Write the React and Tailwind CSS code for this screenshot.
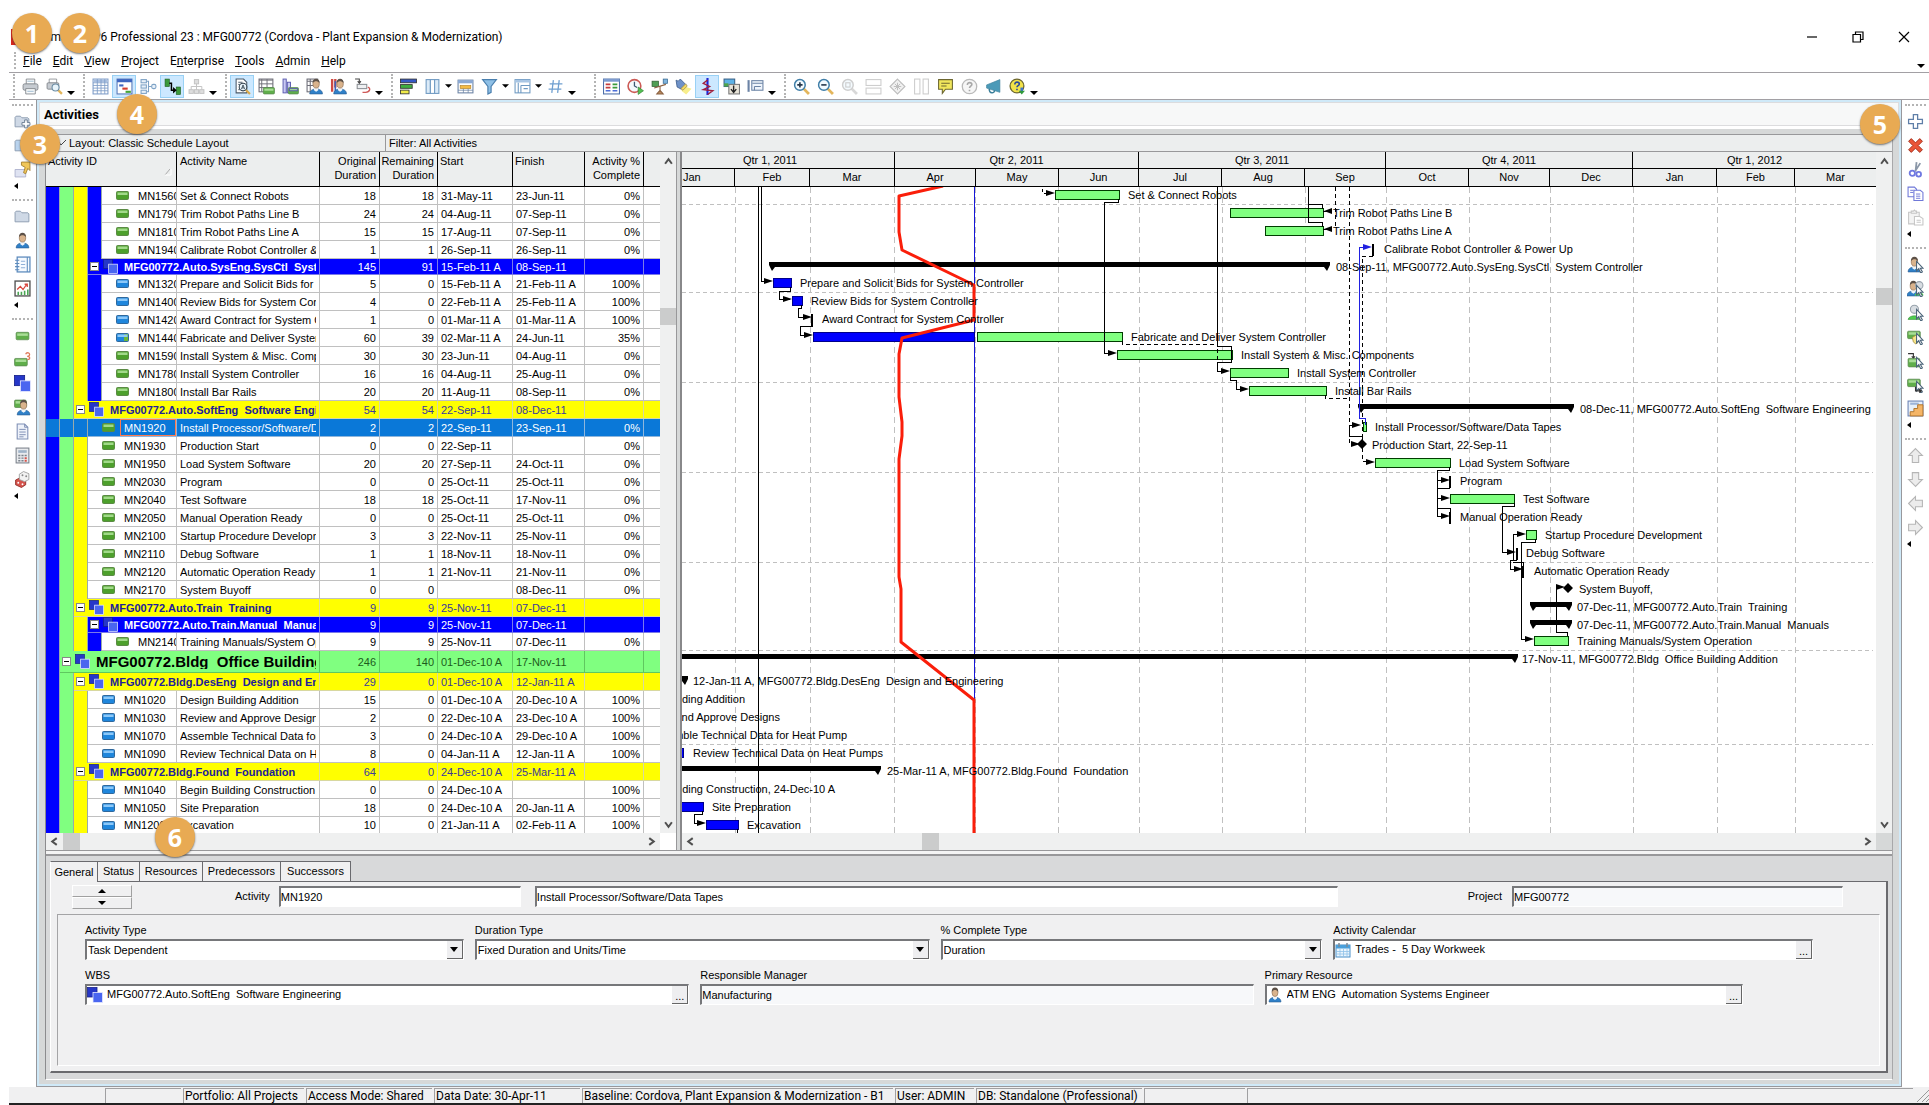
import React from "react";

/* ---------- shared shapes ---------- */
const Cursor = () => (
  <path d="M9 5v9l2-2 2 4 1.500-1-2-3.500H15z" fill="#fff" stroke="#4b6479" strokeWidth="1" />
);
const Person = ({ x = 0, hair = "#5c5148", shirt = "#2f80c8" }) => (
  <g transform={`translate(${x} 0)`}>
    <path d="M1 15c0-3 2-4 4-4.500h4c2 .5 4 1.500 4 4.500z" fill={shirt} stroke="#2a5f93" strokeWidth=".6" />
    <path d="M5 9h4v2.500L7 13l-2-1.500z" fill="#f1f4f7" />
    <ellipse cx="7" cy="5.500" rx="3" ry="4" fill="#d9b38c" stroke="#8a6a4c" strokeWidth=".6" />
    <path d="M3.800 5C3.500 2 5 .6 7 .6S10.500 2 10.200 5C9.500 3.500 8 3 7 3s-2.500.5-3.200 2z" fill={hair} />
  </g>
);
const GreenBar = ({ x = 1, y = 5, w = 12, h = 7 }) => (
  <g>
    <rect x={x} y={y} width={w} height={h} rx="1" fill="#5fae4a" stroke="#5c8a52" strokeWidth=".7" />
    <rect x={x + 1} y={y + 1} width={w - 2} height={h / 3} fill="#a9dd97" />
  </g>
);
const Squares = () => (
  <g strokeWidth=".8">
    <rect x=".5" y=".5" width="9.500" height="9.500" fill="#2637c8" stroke="#16208a" />
    <rect x="6" y="5.500" width="9.500" height="10" fill="#4a66f0" stroke="#e4e8ff" />
  </g>
);
const Folder = ({ c = "#cfd9e6" }) => (
  <path d="M1 13V4l1-1h4l1.500 1.500H13l1 1V13z" fill={c} stroke="#8d9cb0" strokeWidth=".9" />
);
const Glass = ({ children, c = "#3f7ea8", h = "#e3b65c" }) => (
  <g>
    <path d="M10 10l5 5" stroke={h} strokeWidth="2.600" />
    <circle cx="6.500" cy="6.500" r="5" fill="#f4fbff" stroke={c} strokeWidth="1.400" />
    {children}
  </g>
);
/* Each direction is a 90 degree turn of the upward block arrow. */
const Arrow = ({ r }) => (
  <path d="M8 1.500l6.500 6.500H11v6.500H5V8H1.500z" transform={`rotate(${r} 8 8)`} fill="#ececec" stroke="#b5b5b5" strokeWidth="1" />
);

const ICONS = {
  print: (
    <g stroke="#7d8288" strokeWidth=".8">
      <path d="M4 6V1h8v5z" fill="#fdfdfd" />
      <rect x="1" y="5.500" width="14" height="6" rx="1.500" fill="#c6cbd1" />
      <path d="M3.500 10h9v5h-9z" fill="#f8fafb" />
      <path d="M5 3h6M5 12.500h6" stroke="#8fb0c8" />
    </g>
  ),
  preview: (
    <g>
      <path d="M3 5V1h7v4z" fill="#fff" stroke="#8a8f94" strokeWidth=".8" />
      <rect x="1" y="4.500" width="11" height="6" rx="1" fill="#c6cbd1" stroke="#7d8288" strokeWidth=".8" />
      <path d="M11 11l4 4" stroke="#e3b65c" strokeWidth="2.200" />
      <circle cx="9" cy="9" r="3.300" fill="#e8f4fb" stroke="#6a8ba3" />
    </g>
  ),
  grid: (
    <g>
      <rect x="1" y="1" width="14" height="14" fill="#fff" stroke="#7d9cc8" />
      <rect x="1.500" y="1.500" width="13" height="2.500" fill="#a9bfe0" />
      <path d="M1 4.500h14M1 7h14M1 9.500h14M1 12h14M5 1v14M8.500 1v14M12 1v14" stroke="#7d9cc8" strokeWidth=".8" />
    </g>
  ),
  gantt: (
    <g>
      <rect x="1" y="1" width="14" height="14" fill="#fff" stroke="#5878b8" />
      <rect x="1" y="1" width="14" height="3" fill="#3f66c0" />
      <rect x="3" y="6" width="4" height="2" fill="#3f66c0" />
      <rect x="6" y="9" width="5" height="2" fill="#d33b2c" />
      <rect x="9" y="12" width="5" height="2" fill="#45a437" />
    </g>
  ),
  network: (
    <g fill="#e9f1f9" stroke="#7fa3c6">
      <path d="M6 3h2v10H6M8 8h3" fill="none" />
      <rect x="1" y="1.500" width="5" height="3" />
      <rect x="1" y="6.500" width="5" height="3" />
      <rect x="1" y="11.500" width="5" height="3" />
      <rect x="11" y="6" width="4" height="4" rx="1.500" />
    </g>
  ),
  links: (
    <g>
      <rect x="1" y="1" width="4" height="7" fill="#3b9a3b" stroke="#1f5f22" strokeWidth=".6" />
      <rect x="11.500" y="8.500" width="4" height="7" fill="#3b9a3b" stroke="#1f5f22" strokeWidth=".6" />
      <path d="M5 5h2v6.500h3" fill="none" stroke="#000" strokeWidth="1.400" />
      <path d="M8.500 8.500l3.500 3-3.500 3z" fill="#000" />
    </g>
  ),
  tree: (
    <g fill="#dedede" stroke="#c2c2c2" strokeWidth=".9">
      <path d="M8 5v3M3 11V8h10v3M8 8v3" fill="none" />
      <rect x="6" y="1.500" width="4" height="4" />
      <rect x="1" y="11" width="4" height="3.500" />
      <rect x="6" y="11" width="4" height="3.500" />
      <rect x="11" y="11" width="4" height="3.500" />
    </g>
  ),
  find: (
    <g>
      <path d="M2 1h7l3 3v10H2z" fill="#fff" stroke="#4b5a6b" />
      <path d="M4 4h4M4 6h3M4 11h2" stroke="#4b5a6b" strokeWidth=".9" />
      <path d="M11 11l4 4" stroke="#d9a84a" strokeWidth="2" />
      <circle cx="8.500" cy="8.500" r="3.600" fill="#eaf5fc" stroke="#33424f" />
      <path d="M7 10.500l1.500-4 1.500 4M7.500 9.300h2" fill="none" stroke="#33424f" strokeWidth=".8" />
    </g>
  ),
  usage1: (
    <g>
      <rect x="1" y="1" width="13" height="12" fill="#fff" stroke="#6e6e78" />
      <path d="M1 2h13M3.500 1v12M1 5.500h13M1 9h13M8.500 1v12" stroke="#6e6e78" strokeWidth=".9" />
      <GreenBar x={5} y={9} w={10.5} h={6} />
    </g>
  ),
  usage2: (
    <g fill="#c9c9f2" stroke="#5b5bb0" strokeWidth=".9">
      <rect x="1" y="1" width="3" height="13" />
      <rect x="5" y="4" width="3" height="10" />
      <GreenBar x={6} y={9} w={9.5} h={6} />
    </g>
  ),
  usage3: (
    <g>
      <rect x="1" y="1" width="10" height="12" fill="#fff" stroke="#6e6e78" />
      <path d="M1 3h10M4 1v12M1 7h10" stroke="#6e6e78" />
      <Person x={2.5} />
    </g>
  ),
  usage4: (
    <g>
      <path d="M2 1v12M5 1v8" stroke="#cf4a43" strokeWidth="2.200" />
      <path d="M5 3v10" stroke="#3f62b8" strokeWidth="1.500" />
      <Person x={2.5} />
    </g>
  ),
  trace: (
    <g fill="none" stroke="#8b8f94">
      <path d="M1 1h4v3M3.500 3L5 5l1.500-2" stroke="#444" />
      <rect x="3" y="6" width="9" height="4" fill="#eef0f2" />
      <path d="M13 8.500c3 1 2 5-2 5H8" stroke="#cf5a58" strokeWidth="1.300" />
    </g>
  ),
  bars: (
    <g stroke="#333" strokeWidth=".8">
      <rect x=".5" y="1" width="15" height="3.500" fill="#3457c4" />
      <rect x=".5" y="6.200" width="11" height="3.500" fill="#3fae3f" />
      <rect x=".5" y="11.400" width="8" height="3.500" fill="#f1ec4a" />
    </g>
  ),
  columns: (
    <g fill="#dcebf8" stroke="#6f9ac2">
      <rect x="2" y="1.500" width="4" height="13" />
      <rect x="6" y="1.500" width="4" height="13" fill="#fff" />
      <rect x="10" y="1.500" width="4" height="13" />
    </g>
  ),
  timescale: (
    <g>
      <rect x="1" y="2" width="14" height="12" fill="#fff" stroke="#6b83a5" />
      <rect x="1" y="2" width="14" height="3" fill="#8ba9d4" />
      <rect x="3" y="7" width="10" height="3" fill="#f3bb46" stroke="#b4822a" strokeWidth=".6" />
      <path d="M1 11.500h14M6 10v4M10.500 10v4" stroke="#6b83a5" strokeWidth=".7" />
    </g>
  ),
  funnel: <path d="M1.500 1.500h13L9.500 8v5.500L6.500 15V8z" fill="#8fc0e6" stroke="#4a7fae" strokeWidth="1.100" />,
  group: (
    <g fill="none" stroke="#6f9ac2">
      <rect x="1" y="1.500" width="14" height="12.500" fill="#fff" />
      <path d="M1 3h14" stroke="#a9c6e4" strokeWidth="2.500" />
      <path d="M4 4.500V14M6.500 7H15M6.500 7v7M9 10h4" />
    </g>
  ),
  hash: <path d="M6 2L4.500 14M11.500 2L10 14M2.500 5.500h12M1.500 10.500h12" stroke="#6f9fd0" strokeWidth="1.200" />,
  table: (
    <g>
      <rect x=".5" y="1" width="15" height="14" fill="#fff" stroke="#4d6fa8" />
      <rect x=".5" y="1" width="15" height="2.500" fill="#7c9bd0" />
      <path d="M2.500 6h4.500M2.500 9h4.500" stroke="#c43e3e" strokeWidth="1.600" />
      <path d="M9 6h4.500M9 9h4.500" stroke="#3b9a3b" strokeWidth="1.600" />
      <path d="M2.500 12h4.500M9 12h4.500" stroke="#4d6fd8" strokeWidth="1.400" />
    </g>
  ),
  clock: (
    <g>
      <circle cx="7" cy="7.500" r="6" fill="#f5fafd" stroke="#cc5a55" strokeWidth="1.500" />
      <path d="M7 3.500v4l2.500 1.500" stroke="#3e5872" fill="none" strokeWidth="1.200" />
      <path d="M10.500 8.500l5 3.500-5 3.500z" fill="#52c052" stroke="#2f7f2f" strokeWidth=".6" />
    </g>
  ),
  level: (
    <g>
      <rect x="1" y="3" width="6" height="5" fill="#4f9f55" stroke="#2f5f33" strokeWidth=".7" />
      <rect x="11.500" y="1" width="4" height="4" fill="#7fb4dd" stroke="#34668f" strokeWidth=".7" />
      <path d="M3 9.500L14 6M8.500 8v5M5.500 15L8.500 11.500l3 3.500z" stroke="#8a6040" fill="#b98a5c" />
    </g>
  ),
  spotlight: (
    <g>
      <path d="M9 8l6.500 2-5 5.500L6 12z" fill="#f8ee8c" />
      <path d="M1 2l2 1 2-2 5 5-4 4.500-4-2z" fill="#6f92c8" stroke="#40608f" strokeWidth=".8" />
      <path d="M10 5.500l-4.500 4.500 2 1.500 4-4z" fill="#f6d95e" stroke="#9a8a50" strokeWidth=".7" />
    </g>
  ),
  progress: (
    <g>
      <path d="M8 0v16" stroke="#1c24d8" strokeWidth="2" />
      <path d="M8 2L4 5l6 3-6 3 9 1-5 3.500" fill="none" stroke="#a01f3c" strokeWidth="1.300" />
    </g>
  ),
  image: (
    <g>
      <rect x="1" y="1" width="10" height="7" fill="#5db2e6" stroke="#3a6288" />
      <rect x="5.500" y="6" width="10" height="9" fill="#e8e4d8" stroke="#777" />
      <path d="M10 7v6M7.500 10.500l2.500 3 2.500-3" stroke="#222" fill="none" strokeWidth="1.300" />
      <rect x="1" y="5" width="4" height="3" fill="#4ea24a" />
    </g>
  ),
  layout: (
    <g fill="none" stroke="#6b83a5">
      <path d="M1.500 2v11" strokeWidth="2" />
      <rect x="4.500" y="2.500" width="10.500" height="9" fill="#eef4fb" />
      <path d="M5 5h10M7 8h6M7 8v3.500" />
    </g>
  ),
  zoomin: <Glass><path d="M4 6.500h5M6.500 4v5" stroke="#23364a" strokeWidth="1.500" /></Glass>,
  zoomout: <Glass><path d="M4 6.500h5" stroke="#23364a" strokeWidth="1.500" /></Glass>,
  zoomfit: <Glass c="#cfcfcf" h="#d8d8d8"><rect x="4.500" y="4.500" width="4" height="4" fill="none" stroke="#ccc" /></Glass>,
  splith: (
    <g fill="#fff" stroke="#cdcdcd">
      <rect x="1" y="1.500" width="14" height="5.500" />
      <rect x="1" y="9.500" width="14" height="5.500" />
    </g>
  ),
  diamond: (
    <g stroke="#bdbdbd">
      <path d="M8 1l7 7-7 7-7-7z" fill="#f1f1f1" />
      <path d="M8 4.500v7M4.500 8h7M5.500 5.500l5 5M10.500 5.500l-5 5" strokeWidth=".9" />
    </g>
  ),
  splitv: (
    <g fill="#fff" stroke="#cdcdcd">
      <rect x="1.500" y="1" width="5" height="14" />
      <rect x="9.500" y="1" width="5" height="14" />
    </g>
  ),
  comment: (
    <g>
      <path d="M1.500 1.500h13v9H8L5 14.500V10.500H1.500z" fill="#f0e65c" stroke="#6c6630" />
      <path d="M4 5h8M4 7.500h5" stroke="#6c6630" />
    </g>
  ),
  help: (
    <g>
      <circle cx="8" cy="8" r="6.800" fill="#f6f6f6" stroke="#b9b9b9" strokeWidth="1.200" />
      <path d="M6 6.500c0-3 4.200-2.600 4.200-.3 0 1.600-2.200 1.500-2.200 3.300M8 11v1.500" fill="none" stroke="#a8a8a8" strokeWidth="1.500" />
    </g>
  ),
  horn: (
    <g fill="#4b9ab8" stroke="#3b7f9a" strokeWidth=".6">
      <path d="M1.500 6.500L14 1.500v12L1.500 9.500z" />
      <path d="M4 10c0 5 5 5 5 1.500" fill="none" strokeWidth="1.400" />
    </g>
  ),
  helpnow: (
    <g>
      <circle cx="7.500" cy="7.500" r="6.500" fill="#f2e24a" stroke="#6c6630" strokeWidth="1.200" />
      <path d="M5.500 6c0-3 4.200-2.600 4.200-.3 0 1.600-2.200 1.500-2.200 3.100M7.500 10v1.500" fill="none" stroke="#2b4a9a" strokeWidth="1.500" />
      <path d="M12 9v5" stroke="#3d74d0" strokeWidth="2.500" />
      <path d="M9 12l3 3.500 3-3.500z" fill="#2f9a3a" />
    </g>
  ),
  plus: <path d="M6 1.500h4V6h4.500v4H10v4.500H6V10H1.500V6H6z" fill="#fff" stroke="#5f7fa8" strokeWidth="1.200" />,
  del: <path d="M1.500 4L4 1.500 8 5.500l4-4L14.500 4l-4 4 4 4L12 14.500l-4-4-4 4L1.500 12l4-4z" fill="#ea5538" stroke="#a32f1c" strokeWidth=".9" />,
  cut: (
    <g fill="none">
      <path d="M9 1L8 10M12.500 2L8 9" stroke="#8b97a8" strokeWidth="1.700" />
      <circle cx="5" cy="11.500" r="2.500" stroke="#6f78e0" strokeWidth="1.700" />
      <circle cx="11" cy="12.500" r="2.200" stroke="#6f78e0" strokeWidth="1.700" />
    </g>
  ),
  copy: (
    <g fill="#fff" stroke="#6f78d8">
      <path d="M1 2h6l2 2v7H1z" />
      <path d="M6.500 5h6l2.500 2v7.500H6.500z" />
      <path d="M3 5h3M3 7h3M8.500 8.500h4M8.500 10.500h4M8.500 12.500h4" strokeWidth=".9" />
    </g>
  ),
  paste: (
    <g fill="#f3f3f3" stroke="#c6c6c6">
      <path d="M1.500 3h10v11h-10z" />
      <path d="M4 4V2h2l1-1 1 1h1v2z" />
      <path d="M7 7h5l3 2v6H7z" fill="#fff" />
      <path d="M9 10.500h4M9 12.500h4" />
    </g>
  ),
  asgRes: (<g><Person x={0} /><Cursor /></g>),
  asgRole2: (
    <g>
      <Person x={-1} />
      <circle cx="11.500" cy="5" r="3.500" fill="#d8dde2" stroke="#98a2ab" />
      <path d="M7 14.500c1-4 8-4 8.500 0z" fill="#4ed04e" />
      <Cursor />
    </g>
  ),
  asgRole: (
    <g>
      <circle cx="7" cy="5" r="3.800" fill="#d8dde2" stroke="#98a2ab" />
      <path d="M1 14.500c1-4.500 11-4.500 12 0z" fill="#4ecf50" stroke="#3b8f3d" strokeWidth=".6" />
      <Cursor />
    </g>
  ),
  asgCode: (<g><GreenBar x={0.5} y={3} /><path d="M5 9l3-2 3 2-1 5-2 1-2-2z" fill="#f6e68a" stroke="#a68f3c" strokeWidth=".8" /><Cursor /></g>),
  pred: (<g><path d="M1 1.500h5v4M4.500 4L6 6l1.500-2" stroke="#333" fill="none" /><GreenBar x={1} y={6} w={11} h={8} /><Cursor /></g>),
  succ: (<g><GreenBar x={0.5} y={3} /><Cursor /><path d="M8 10v4h5M11.500 12.500L13.500 14l-2 1.500" stroke="#333" fill="none" /></g>),
  steps: (
    <g>
      <rect x="1" y="1" width="14" height="14" fill="#e6effa" stroke="#6b83b5" />
      <path d="M3 3.500h8" stroke="#9db4d8" strokeWidth="2" />
      <path d="M3 15v-4h3.500V8H10V4.500h5V15z" fill="#f5b566" stroke="#b0742a" strokeWidth=".9" />
    </g>
  ),
  up: <Arrow r={0} />,
  down: <Arrow r={180} />,
  left: <Arrow r={270} />,
  right: <Arrow r={90} />,
  folderAdd: (<g><Folder /><path d="M10 6.500h2.500V9H15v2.500h-2.500V14H10v-2.500H7.500V9H10z" fill="#fff" stroke="#6a7d92" strokeWidth=".9" /></g>),
  folderOpen: <Folder c="#b9d3ee" />,
  folderUp: (<g><path d="M1 15V8h10v7z" fill="#dfe3f2" stroke="#a9aecb" strokeWidth=".8" /><path d="M7 1h8v8l-2-2-2 5-2-1 1.500-5L7 4z" fill="#f0c659" stroke="#a07c2a" strokeWidth=".8" /></g>),
  folder: <Folder />,
  person: <Person x={1} />,
  notebook: (
    <g>
      <rect x="3" y="1" width="12" height="14" fill="#f6faff" stroke="#5d8bbd" strokeWidth="1.200" />
      <path d="M1 4h4M1 7h4M1 10h4M1 13h4M12.500 1v14" stroke="#5d8bbd" />
      <path d="M6.500 5h4M6.500 8h4M6.500 11h4" stroke="#8fb0d8" />
    </g>
  ),
  chart: (
    <g>
      <rect x="1" y="1" width="14" height="14" fill="#fff" stroke="#555" strokeWidth="1.300" />
      <path d="M3 9l3-3 2.500 3L12 4M10 4h2.500v2.500" fill="none" stroke="#d8453c" strokeWidth="1.200" />
      <path d="M4 14v-3M7 14v-3M10 14v-4M13 14V9" stroke="#49a552" strokeWidth="1.500" />
    </g>
  ),
  act: <GreenBar x={2} y={5} w={12} h={7} />,
  act2: (<g><GreenBar x={0.5} y={7} w={12} h={7} /><path d="M11 3c1-2.500 4.500-1 3.500 1-.5 1.500-2 1-2 1 3 0 3 3 0 3" fill="none" stroke="#e07a5a" strokeWidth="1.200" /></g>),
  wbs: <Squares />,
  actPerson: (<g><GreenBar x={0.5} y={1} w={11} h={7} /><Person x={2} /></g>),
  doc: (
    <g fill="#eef2fa" stroke="#7f8fb5">
      <path d="M3 1h7l3 3v11H3z" />
      <path d="M5 6h6M5 8.500h6M5 11h6M5 13h4M10 1v3h3" strokeWidth=".9" fill="none" />
    </g>
  ),
  calc: (
    <g>
      <rect x="2" y="1" width="12" height="14" fill="#e9ebee" stroke="#7b828b" />
      <rect x="4" y="3" width="8" height="2.500" fill="#9fb3c8" />
      <path d="M4 8h2M7 8h2M4 10.500h2M7 10.500h2M4 13h2M7 13h2M10 8h2" stroke="#7b828b" strokeWidth="1.300" />
      <path d="M10 10.500h2M10 13h2" stroke="#d8534a" strokeWidth="1.800" />
    </g>
  ),
  dice: (
    <g>
      <path d="M1.500 8.500l4-2 5.500 2v4.500l-4 2.500-5.500-2.500z" fill="#d6534c" stroke="#8e2822" strokeWidth=".8" />
      <path d="M5 3l4-2.500 5 2V8l-4 2-5-2z" fill="#f2f2f2" stroke="#9a9a9a" strokeWidth=".8" />
      <circle cx="8" cy="4" r=".9" fill="#888" /><circle cx="11.500" cy="5" r=".9" fill="#888" />
      <circle cx="4" cy="11" r=".9" fill="#fff" /><circle cx="8" cy="12.500" r=".9" fill="#fff" />
    </g>
  ),
  calendar: (
    <g>
      <rect x="1" y="3" width="14" height="12" fill="#eaf5fd" stroke="#4a8fc8" />
      <rect x="1" y="3" width="14" height="3.500" fill="#4aa0dc" />
      <path d="M1 9.500h14M1 12h14M5 7v8M8.500 7v8M12 7v8" stroke="#8fc2e8" strokeWidth=".8" />
      <path d="M4 1v4M12 1v4" stroke="#7b8a98" strokeWidth="1.500" />
    </g>
  ),
};

const Icon = ({ name, className = "size-4" }) => (
  <svg viewBox="0 0 16 16" className={className} aria-hidden="true">{ICONS[name]}</svg>
);

/* ---------- tool bars ---------- */
const Dots = () => <span className="h-6 w-0 border-l-2 border-dotted border-[#b4b4b4]" />;
const Caret = () => (
  <svg viewBox="0 0 8 4" className="h-1 w-2" aria-hidden="true"><path d="M0 0h8L4 4z" /></svg>
);

function Tool({ name, on, drop }) {
  return (
    <button
      type="button"
      aria-label={name}
      className={`flex h-[23px] shrink-0 items-center border ${drop ? "w-[33px] gap-1 pl-[3px]" : "w-6 justify-center"} ${
        on ? "border-[#99d1f5] bg-[#cce8ff]" : "border-transparent"
      }`}
    >
      <Icon name={name} className="size-[17px] shrink-0" />
      {drop && <svg viewBox="0 0 8 4" className="h-1 w-[7px] shrink-0" aria-hidden="true"><path d="M0 0h8L4 4z" /></svg>}
    </button>
  );
}

const TOOLS = [
  ["print", "preview"],
  ["grid", "gantt*", "network", "links*", "tree"],
  ["find*", "usage1", "usage2", "usage3", "usage4", "trace"],
  ["bars", "columns+", "timescale", "funnel+", "group+", "hash"],
  ["table", "clock", "level", "spotlight", "progress*", "image", "layout"],
  ["zoomin", "zoomout", "zoomfit", "splith", "diamond", "splitv", "comment", "help", "horn", "helpnow"],
];

function TopTools() {
  return (
    <div className="flex h-[26px] items-center pl-1">
      {TOOLS.map((g, i) => (
        <div key={i} className={`flex items-center ${i === 3 ? "mr-[17px]" : "mr-[7px]"}`}>
          <Dots />
          <div className="ml-[3px] flex">
            {g.map((n) => (
              <Tool key={n} name={n.replace(/[*+]/, "")} on={n.endsWith("*")} drop={n.endsWith("+")} />
            ))}
          </div>
          <button type="button" aria-label="More" className="flex h-[18px] w-[10px] items-end justify-center"><Caret /></button>
        </div>
      ))}
    </div>
  );
}

function SideTools({ groups, label }) {
  return (
    <nav aria-label={label} className="flex w-[27px] shrink-0 flex-col pt-px">
      {groups.map((g, i) => (
        <div key={i} className="mb-[5px] flex flex-col items-center">
          <span className="flex h-2 w-full items-center px-[3px]"><span className="w-full border-t-2 border-dotted border-[#b4b4b4]" /></span>
          {g.map((n) => (
            <button key={n} type="button" aria-label={n} className="flex h-6 w-6 items-center justify-center">
              <Icon name={n} className="size-[17px]" />
            </button>
          ))}
          <button type="button" aria-label="More" className="flex h-[10px] w-full items-center pl-[5px]">
            <svg viewBox="0 0 4 6" className="h-[6px] w-1" aria-hidden="true"><path d="M4 0v6L0 3z" /></svg>
          </button>
        </div>
      ))}
    </nav>
  );
}

/* ---------- activity table ---------- */
const BAND = ["bg-[#0000ff]", "bg-[#80ff80]", "bg-[#ffff00]", "bg-[#0000ff]"];
const GROUP = [
  null,
  { bg: "bg-[#80ff80]", text: "text-black text-[15px]", num: "text-[#1d5c1d]", h: "h-[22px]", line: "border-[#5fc85f]" },
  { bg: "bg-[#ffff00]", text: "text-[#20209a]", num: "text-[#3a3a9c]", h: "h-[18px]", line: "border-[#d8d8a0]" },
  { bg: "bg-[#0000ff]", text: "text-white", num: "text-white", h: "h-[16px]", line: "border-[#7a7ae8]" },
];

const ROWS = [
  [4, "g", "MN1560", "Set & Connect Robots", 18, 18, "31-May-11", "23-Jun-11", "0%"],
  [4, "g", "MN1790", "Trim Robot Paths Line B", 24, 24, "04-Aug-11", "07-Sep-11", "0%"],
  [4, "g", "MN1810", "Trim Robot Paths Line A", 15, 15, "17-Aug-11", "07-Sep-11", "0%"],
  [4, "g", "MN1940", "Calibrate Robot Controller & Power Up", 1, 1, "26-Sep-11", "26-Sep-11", "0%"],
  [3, "G", "MFG00772.Auto.SysEng.SysCtl  System Controller", "", 145, 91, "15-Feb-11 A", "08-Sep-11", ""],
  [4, "b", "MN1320", "Prepare and Solicit Bids for System Controller", 5, 0, "15-Feb-11 A", "21-Feb-11 A", "100%"],
  [4, "b", "MN1400", "Review Bids for System Controller", 4, 0, "22-Feb-11 A", "25-Feb-11 A", "100%"],
  [4, "b", "MN1420", "Award Contract for System Controller", 1, 0, "01-Mar-11 A", "01-Mar-11 A", "100%"],
  [4, "m", "MN1440", "Fabricate and Deliver System Controller", 60, 39, "02-Mar-11 A", "24-Jun-11", "35%"],
  [4, "g", "MN1590", "Install System & Misc. Components", 30, 30, "23-Jun-11", "04-Aug-11", "0%"],
  [4, "g", "MN1780", "Install System Controller", 16, 16, "04-Aug-11", "25-Aug-11", "0%"],
  [4, "g", "MN1800", "Install Bar Rails", 20, 20, "11-Aug-11", "08-Sep-11", "0%"],
  [2, "G", "MFG00772.Auto.SoftEng  Software Engineering", "", 54, 54, "22-Sep-11", "08-Dec-11", ""],
  [3, "g", "MN1920", "Install Processor/Software/Data Tapes", 2, 2, "22-Sep-11", "23-Sep-11", "0%"],
  [3, "g", "MN1930", "Production Start", 0, 0, "22-Sep-11", "", "0%"],
  [3, "g", "MN1950", "Load System Software", 20, 20, "27-Sep-11", "24-Oct-11", "0%"],
  [3, "g", "MN2030", "Program", 0, 0, "25-Oct-11", "25-Oct-11", "0%"],
  [3, "g", "MN2040", "Test Software", 18, 18, "25-Oct-11", "17-Nov-11", "0%"],
  [3, "g", "MN2050", "Manual Operation Ready", 0, 0, "25-Oct-11", "25-Oct-11", "0%"],
  [3, "g", "MN2100", "Startup Procedure Development", 3, 3, "22-Nov-11", "25-Nov-11", "0%"],
  [3, "g", "MN2110", "Debug Software", 1, 1, "18-Nov-11", "18-Nov-11", "0%"],
  [3, "g", "MN2120", "Automatic Operation Ready", 1, 1, "21-Nov-11", "21-Nov-11", "0%"],
  [3, "g", "MN2170", "System Buyoff", 0, 0, "", "08-Dec-11", "0%"],
  [2, "G", "MFG00772.Auto.Train  Training", "", 9, 9, "25-Nov-11", "07-Dec-11", ""],
  [3, "G", "MFG00772.Auto.Train.Manual  Manuals", "", 9, 9, "25-Nov-11", "07-Dec-11", ""],
  [4, "g", "MN2140", "Training Manuals/System Operation", 9, 9, "25-Nov-11", "07-Dec-11", "0%"],
  [1, "G", "MFG00772.Bldg  Office Building Addition", "", 246, 140, "01-Dec-10 A", "17-Nov-11", ""],
  [2, "G", "MFG00772.Bldg.DesEng  Design and Engineering", "", 29, 0, "01-Dec-10 A", "12-Jan-11 A", ""],
  [3, "b", "MN1020", "Design Building Addition", 15, 0, "01-Dec-10 A", "20-Dec-10 A", "100%"],
  [3, "b", "MN1030", "Review and Approve Designs", 2, 0, "22-Dec-10 A", "23-Dec-10 A", "100%"],
  [3, "b", "MN1070", "Assemble Technical Data for Heat Pump", 3, 0, "24-Dec-10 A", "29-Dec-10 A", "100%"],
  [3, "b", "MN1090", "Review Technical Data on Heat Pumps", 8, 0, "04-Jan-11 A", "12-Jan-11 A", "100%"],
  [2, "G", "MFG00772.Bldg.Found  Foundation", "", 64, 0, "24-Dec-10 A", "25-Mar-11 A", ""],
  [3, "b", "MN1040", "Begin Building Construction", 0, 0, "24-Dec-10 A", "", "100%"],
  [3, "b", "MN1050", "Site Preparation", 18, 0, "24-Dec-10 A", "20-Jan-11 A", "100%"],
  [3, "b", "MN1200", "Excavation", 10, 0, "21-Jan-11 A", "02-Feb-11 A", "100%"],
];

const Pill = ({ kind }) => (
  <svg viewBox="0 0 13 9" className="mr-[9px] ml-[14px] h-[9px] w-[13px] shrink-0" aria-hidden="true">
    <rect x=".5" y=".5" width="12" height="8" rx="1" fill={kind === "g" ? "#4da02c" : "#1f86dc"} stroke={kind === "g" ? "#5b8a44" : "#2f689c"} />
    {kind === "m" && <path d="M8 1h4v7H8z" fill="#6cb83a" />}
    <rect x="1.500" y="1.500" width="10" height="2.500" fill={kind === "g" ? "#a2d98a" : "#8cc8f8"} />
  </svg>
);

const Bands = ({ n, selected }) =>
  BAND.slice(0, n).map((c, i) => (
    <span key={i} className={`w-[14px] shrink-0 border-r border-[#9aa] ${selected ? "bg-[#0a78d8]" : c}`} />
  ));

function Row({ row, last }) {
  const [depth, kind, id, name, od, rd, start, finish, pct] = row;
  const isGroup = kind === "G";
  const sel = id === "MN1920";
  const g = isGroup ? GROUP[depth] : null;
  const h = last ? "h-[16px]" : isGroup ? g.h : "h-[18px]";
  const line = isGroup ? g.line : sel ? "border-[#8fb6dc]" : "border-[#c0c0c0]";
  const tone = isGroup ? `${g.bg} ${g.num}` : sel ? "bg-[#0a78d8] text-white" : "bg-white";
  const cell = `overflow-hidden border-r p-0 whitespace-pre ${last ? "" : "border-b"} ${line} ${tone}`;
  const tail = (
    <>
      <td className={`${cell} pr-[3px] text-right`}>{od}</td>
      <td className={`${cell} pr-[3px] text-right`}>{rd}</td>
      <td className={`${cell} pl-[3px]`}>{start}</td>
      <td className={`${cell} pl-[3px]`}>{finish}</td>
      <td className={`${cell} pr-[3px] text-right`}>{pct}</td>
      <td className={`${cell} border-r-0`} />
    </>
  );
  if (isGroup) {
    return (
      <tr className={h}>
        <td colSpan={2} className="p-0">
          <div className={`flex overflow-hidden ${h}`}>
            <Bands n={depth} />
            <div className={`flex min-w-0 flex-1 items-center overflow-hidden border-r border-b pr-[3px] font-bold whitespace-pre ${line} ${g.bg} ${g.text}`}>
              <button type="button" aria-label="Collapse" className="mr-1 ml-[2px] flex size-[9px] shrink-0 items-center justify-center border border-[#888] bg-white">
                <span className="h-px w-[5px] bg-black" />
              </button>
              <Icon name="wbs" className="mr-[6px] size-[15px] shrink-0" />
              <span className="min-w-0 flex-1 overflow-hidden">{id}</span>
            </div>
          </div>
        </td>
        {tail}
      </tr>
    );
  }
  return (
    <tr className={h}>
      <td className="p-0">
        <div className={`flex overflow-hidden ${h}`}>
          <Bands n={depth} selected={sel} />
          <div className={`flex min-w-0 flex-1 items-center overflow-hidden border-r ${last ? "" : "border-b"} ${line} ${tone}`}>
            <Pill kind={kind} />
            <span className={sel ? "-ml-[4px] flex h-full flex-1 items-center border border-[#ff7a50] pl-[3px]" : ""}>{id}</span>
          </div>
        </div>
      </td>
      <td className={`${cell} px-[3px]`}><div className="overflow-hidden">{name}</div></td>
      {tail}
    </tr>
  );
}

const TH = "h-[35px] overflow-hidden border-r border-b border-black bg-[#eceeee] p-0 align-top font-normal leading-[14px] pt-[2px] whitespace-pre";

function ActivityTable() {
  return (
    <table className="w-full table-fixed border-separate border-spacing-0 text-[11px] leading-[14px]">
      <colgroup>
        <col className="w-[131px]" /><col className="w-[143px]" /><col className="w-[60px]" /><col className="w-[58px]" />
        <col className="w-[75px]" /><col className="w-[72px]" /><col className="w-[59px]" /><col />
      </colgroup>
      <thead>
        <tr>
          <th className={`${TH} pl-[2px] text-left`}>
            Activity ID
            <svg viewBox="0 0 8 8" className="mr-1 ml-auto size-2" aria-hidden="true"><path d="M1 7L6 1" stroke="#aaa" /><path d="M1 7h6V1" fill="none" stroke="#fff" /></svg>
          </th>
          <th className={`${TH} pl-[3px] text-left`}>Activity Name</th>
          <th className={`${TH} pr-[3px] text-right`}>{"Original\nDuration"}</th>
          <th className={`${TH} pr-[3px] text-right`}>{"Remaining\nDuration"}</th>
          <th className={`${TH} pl-[2px] text-left`}>Start</th>
          <th className={`${TH} pl-[2px] text-left`}>Finish</th>
          <th className={`${TH} pr-[3px] text-right`}>{"Activity %\nComplete"}</th>
          <th className={`${TH} border-r-0`} />
        </tr>
      </thead>
      <tbody>
        {ROWS.map((r, i) => <Row key={r[2]} row={r} last={i === ROWS.length - 1} />)}
      </tbody>
    </table>
  );
}

/* ---------- scroll bars ---------- */
const Chevron = ({ d }) => (
  <svg viewBox="0 0 8 8" className="size-[9px]" fill="none" stroke="#505050" strokeWidth="1.800" aria-hidden="true"><path d={d} /></svg>
);
const VScroll = ({ thumb }) => (
  <div className="flex w-4 shrink-0 flex-col items-center bg-[#eff0f0]">
    <button type="button" aria-label="Scroll up" className="flex h-[18px] items-center"><Chevron d="M1 6l3-4 3 4" /></button>
    <div className="flex w-full flex-1 flex-col">
      <span className={`${thumb} h-[17px] w-full bg-[#cbcccc]`} />
    </div>
    <button type="button" aria-label="Scroll down" className="flex h-[18px] items-center"><Chevron d="M1 2l3 4 3-4" /></button>
  </div>
);
const HScroll = ({ thumb, end }) => (
  <div className={`flex h-[17px] items-center bg-[#eff0f0] ${end}`}>
    <button type="button" aria-label="Scroll left" className="flex w-[17px] justify-center"><Chevron d="M6 1L2 4l4 3" /></button>
    <div className="flex h-full flex-1"><span className={`${thumb} h-full w-[17px] bg-[#cbcccc]`} /></div>
    <button type="button" aria-label="Scroll right" className="flex w-[17px] justify-center"><Chevron d="M2 1l4 3-4 3" /></button>
  </div>
);

/* ---------- Gantt chart ---------- */
const MONTH_X = [735, 810, 894, 975, 1058, 1139, 1222, 1305, 1386, 1469, 1550, 1633, 1717, 1795];
const QUARTERS = [
  ["Qtr 1, 2011", "w-[213px]", [["Jan", "w-[53px]"], ["Feb", "w-[75px]"], ["Mar", "flex-1"]]],
  ["Qtr 2, 2011", "w-[244px]", [["Apr", "w-[81px]"], ["May", "w-[83px]"], ["Jun", "flex-1"]]],
  ["Qtr 3, 2011", "w-[247px]", [["Jul", "w-[83px]"], ["Aug", "w-[83px]"], ["Sep", "flex-1"]]],
  ["Qtr 4, 2011", "w-[247px]", [["Oct", "w-[83px]"], ["Nov", "w-[81px]"], ["Dec", "flex-1"]]],
  ["Qtr 1, 2012", "flex-1", [["Jan", "w-[84px]"], ["Feb", "w-[78px]"], ["Mar", "flex-1"]]],
];

/* [rowTop, x1, x2, colour] */
const G = "#80ff80";
const B = "#0000ff";
const BARS = [
  [188, 1055, 1119, G], [206, 1230, 1323, G], [224, 1265, 1323, G],
  [276, 773, 791, B], [294, 792, 802, B], [330, 813, 974, B], [330, 977, 1122, G],
  [348, 1117, 1232, G], [366, 1230, 1288, G], [384, 1249, 1326, G],
  [420, 1363, 1366, G], [456, 1375, 1450, G], [492, 1450, 1514, G], [528, 1526, 1536, G],
  [634, 1534, 1568, G], [746, 676, 683, B], [800, 670, 703, B], [818, 706, 738, B],
];
const SUMS = [
  [260, 769, 1330], [402, 1358, 1574], [600, 1530, 1572], [618, 1530, 1572],
  [652, 660, 1518], [674, 660, 688], [764, 660, 881],
];
const TICKS = [[1373, 245], [812, 315], [1450, 477], [1450, 513], [1517, 549], [1523, 567]];
const LABELS = [
  [188, 1128, "Set & Connect Robots"],
  [206, 1333, "Trim Robot Paths Line B"],
  [224, 1333, "Trim Robot Paths Line A"],
  [242, 1384, "Calibrate Robot Controller & Power Up"],
  [260, 1336, "08-Sep-11, MFG00772.Auto.SysEng.SysCtl  System Controller"],
  [276, 800, "Prepare and Solicit Bids for System Controller"],
  [294, 811, "Review Bids for System Controller"],
  [312, 822, "Award Contract for System Controller"],
  [330, 1131, "Fabricate and Deliver System Controller"],
  [348, 1241, "Install System & Misc. Components"],
  [366, 1297, "Install System Controller"],
  [384, 1335, "Install Bar Rails"],
  [402, 1580, "08-Dec-11, MFG00772.Auto.SoftEng  Software Engineering"],
  [420, 1375, "Install Processor/Software/Data Tapes"],
  [438, 1372, "Production Start, 22-Sep-11"],
  [456, 1459, "Load System Software"],
  [474, 1460, "Program"],
  [492, 1523, "Test Software"],
  [510, 1460, "Manual Operation Ready"],
  [528, 1545, "Startup Procedure Development"],
  [546, 1526, "Debug Software"],
  [564, 1534, "Automatic Operation Ready"],
  [582, 1579, "System Buyoff,"],
  [600, 1577, "07-Dec-11, MFG00772.Auto.Train  Training"],
  [618, 1577, "07-Dec-11, MFG00772.Auto.Train.Manual  Manuals"],
  [634, 1577, "Training Manuals/System Operation"],
  [652, 1522, "17-Nov-11, MFG00772.Bldg  Office Building Addition"],
  [674, 693, "12-Jan-11 A, MFG00772.Bldg.DesEng  Design and Engineering"],
  [692, 745, "Design Building Addition", "end"],
  [710, 780, "Review and Approve Designs", "end"],
  [728, 847, "Assemble Technical Data for Heat Pump", "end"],
  [746, 693, "Review Technical Data on Heat Pumps"],
  [764, 887, "25-Mar-11 A, MFG00772.Bldg.Found  Foundation"],
  [782, 835, "Begin Building Construction, 24-Dec-10 A", "end"],
  [800, 712, "Site Preparation"],
  [818, 747, "Excavation"],
];
const LINKS = [
  "M758 188V834", "M761 188V282H770", "M790 288V292H779V300H790", "M801 306V309H798V318H808",
  "M812 320V327H800V336H810", "M1042 190V193M1044 194H1050", "M1118 200V203H1104V354H1112",
  "M1217 188V347H1231V363H1217V372H1226", "M1230 378V381H1236V390H1246",
  "M1308 188V223H1322V228M1308 205H1322V210M1323 212H1330M1323 230H1330",
  "M1349 426H1358M1349 426V437H1362V442", "M1449 468V471H1437V517H1446M1437 481H1446M1450 489H1437M1437 499H1446M1450 509H1437M1450 509V516",
  "M1514 504V507H1502V553H1512", "M1513 561V535H1522M1535 540V543H1521V640H1530M1516 556V561H1510V570H1518M1513 563H1523V567",
  "M1556 633V588H1562M1556 633H1567V637", "M702 812V815H694V824H702", "M737 830V834H742",
];
const DASHES = [
  "M1122 342V345H1217", "M1325 396V399H1349", "M1335 188V230", "M1349 188V444H1356", "M1373 257H1362V462H1370", "M1217 350V362",
];
const HEADS = [
  [773, 282], [792, 300], [812, 318], [813, 336], [1055, 194], [1117, 354], [1230, 372], [1249, 390],
  [1361, 426], [1360, 445], [1375, 463], [1450, 481], [1450, 499], [1450, 517], [1526, 535],
  [1516, 553], [1523, 570], [1565, 588], [1534, 640], [706, 824],
];

function Gantt() {
  return (
    <div className="flex min-w-0 flex-1 flex-col overflow-hidden bg-white">
      <div className="flex h-[35px] shrink-0 bg-[#eceeee] text-center text-[11px]">
        {QUARTERS.map(([q, w, months], i) => (
          <div key={q} className={`flex flex-col ${w} ${i === 4 ? "" : "shrink-0 border-r border-black"}`}>
            <div className={`h-[17px] border-b border-black leading-[16px] ${i === 0 ? "pr-9" : ""}`}>{q}</div>
            <div className="flex h-[18px] border-b border-black leading-[17px]">
              {months.map(([m, mw], j) => (
                <div key={m} className={`${mw} ${j < 2 ? "shrink-0 border-r border-black" : ""} ${i === 0 && j === 0 ? "pl-px text-left" : ""}`}>{m}</div>
              ))}
            </div>
          </div>
        ))}
      </div>
      <svg width="1194" height="646" viewBox="682 188 1194 646" className="block max-w-none shrink-0 overflow-hidden text-[11px]" role="img" aria-label="Gantt chart">
        <g stroke="#c0c0c0" strokeDasharray="6 4" shapeRendering="crispEdges">
          {MONTH_X.map((x) => <path key={x} d={`M${x} 188V834`} />)}
          {[205, 293, 383, 473, 563, 651, 745].map((y) => <path key={y} d={`M682 ${y}H1873`} strokeDasharray="4 3" />)}
        </g>
        <path d="M974 188V702" stroke="#1616d8" shapeRendering="crispEdges" />
        {BARS.map(([y, a, b, c]) => (
          <rect key={`${y}-${a}`} x={a} y={y + 3} width={b - a} height="9" fill={c} stroke={c === B ? "#00008a" : "#003c00"} shapeRendering="crispEdges" />
        ))}
        {SUMS.map(([y, a, b]) => (
          <path key={y} d={`M${a} ${y + 3}H${b}v3l-3 6-3-4H${a + 6}l-3 4-3-6z`} />
        ))}
        <g fill="none" stroke="#000" shapeRendering="crispEdges">
          {LINKS.map((d) => <path key={d} d={d} />)}
          {DASHES.map((d) => <path key={d} d={d} strokeDasharray="4 3" />)}
          {TICKS.map(([x, y]) => <path key={`${x}-${y}`} d={`M${x} ${y}v12`} strokeWidth="2" />)}
        </g>
        {HEADS.map(([x, y]) => <path key={`${x}-${y}`} d={`M${x} ${y}l-9-3v6z`} />)}
        <path d="M1324 212l8-3v6zM1324 230l8-3v6z" />
        <path d="M1362 440l5 5-5 5-5-5zM1568 584l5 5-5 5-5-5z" />
        <path d="M1368 248H1359V419H1365V426" fill="none" stroke="#2020e0" shapeRendering="crispEdges" />
        <path d="M1372 248l-9-3v6z" fill="#2020e0" />
        <path
          d="M943 187L899 197V233L902 251 974 286V321L902 339 899 355V398L902 423V437L899 460V578L901 590V643L974 701V834"
          fill="none" stroke="#fa1e0a" strokeWidth="3" strokeLinejoin="round"
        />
        <g>
          {LABELS.map(([y, x, t, anchor]) => (
            <text key={y} x={x} y={y + 12} textAnchor={anchor || "start"} className="whitespace-pre">{t}</text>
          ))}
        </g>
      </svg>
    </div>
  );
}

/* ---------- details form ---------- */
const SUNK = "h-[21px] border-t-2 border-l-2 border-r border-b border-t-[#76777a] border-l-[#76777a] border-r-white border-b-white";

function Select({ id, label, value }) {
  return (
    <div className="flex min-w-0 flex-col gap-px">
      <label htmlFor={id}>{label}</label>
      <div className={`relative flex bg-white ${SUNK}`}>
        <select id={id} defaultValue={value} className="w-full appearance-none bg-white pl-px outline-none"><option>{value}</option></select>
        <span className="pointer-events-none absolute inset-y-0 right-0 flex w-4 items-center justify-center border-r border-b border-[#666] bg-[#eeeef0]">
          <svg viewBox="0 0 8 5" className="h-[5px] w-2" aria-hidden="true"><path d="M0 0h8L4 5z" /></svg>
        </span>
      </div>
    </div>
  );
}
function Lookup({ id, label, value, icon }) {
  return (
    <div className="flex min-w-0 flex-col gap-px">
      <label htmlFor={id}>{label}</label>
      <div className={`flex items-stretch bg-white ${SUNK}`}>
        <Icon name={icon} className="mr-1 size-4 shrink-0 self-center" />
        <input id={id} defaultValue={value} className="min-w-0 flex-1 pb-[2px] outline-none" />
        <button type="button" aria-label={`Choose ${label}`} className="flex w-4 items-end justify-center border-r border-b border-[#666] bg-[#eeeef0] leading-[14px]">...</button>
      </div>
    </div>
  );
}

function Details() {
  return (
    <section className="flex flex-1 flex-col bg-[#d8d9da] px-1 pt-[5px] pb-[6px] text-[11px] leading-[15px]">
      <div role="tablist" className="flex h-5">
        {["General", "Status", "Resources", "Predecessors", "Successors"].map((t, i) => (
          <button
            key={t} type="button" role="tab" aria-selected={i === 0}
            className={`border-t border-r border-[#6a6a6e] bg-[#f0f0f1] ${
              i === 0 ? "relative -mb-px h-[21px] w-12 border-l border-l-white" : ["", "w-[42px]", "w-[63px]", "w-[78px]", "w-[70px]"][i]
            }`}
          >
            {t}
          </button>
        ))}
      </div>
      <div className="flex flex-1 flex-col border-t border-r-2 border-b-2 border-l border-[#6a6a6e] border-l-white bg-[#f0f0f1] px-[6px] pb-[5px]">
        <div className="flex h-[32px] items-center pb-[3px]">
          <div className="ml-[15px] flex w-[60px] flex-col">
            {["M0 4h8L4 0z", "M0 0h8L4 4z"].map((d, i) => (
              <button key={d} type="button" aria-label={i ? "Next" : "Previous"} className="flex h-3 items-center justify-center border border-[#a0a0a0] border-t-white border-l-white">
                <svg viewBox="0 0 8 4" className="h-1 w-2" aria-hidden="true"><path d={d} /></svg>
              </button>
            ))}
          </div>
          <label htmlFor="act" className="mr-[9px] ml-[103px]">Activity</label>
          <input id="act" defaultValue="MN1920" className={`w-[242px] bg-white ${SUNK}`} />
          <input aria-label="Activity name" defaultValue="Install Processor/Software/Data Tapes" className={`ml-[14px] min-w-0 flex-1 bg-white ${SUNK}`} />
          <label htmlFor="proj" className="mr-[10px] ml-[130px]">Project</label>
          <input id="proj" defaultValue="MFG00772" className={`mr-[37px] w-[331px] bg-[#f7f8fa] ${SUNK}`} />
        </div>
        <div className="flex flex-1 flex-col gap-2 border border-[#a4a4a6] border-r-white border-b-white pt-2 pl-[27px]">
          <div className="grid grid-cols-[379fr_455fr_382fr_480fr] gap-x-[11px] pr-[66px]">
            <Select id="atype" label="Activity Type" value="Task Dependent" />
            <Select id="dtype" label="Duration Type" value="Fixed Duration and Units/Time" />
            <Select id="ptype" label="% Complete Type" value="Duration" />
            <Lookup id="cal" label="Activity Calendar" value="Trades -  5 Day Workweek" icon="calendar" />
          </div>
          <div className="grid grid-cols-[605fr_554fr_479fr] gap-x-[11px] pr-[136px]">
            <Lookup id="wbs" label="WBS" value="MFG00772.Auto.SoftEng  Software Engineering" icon="wbs" />
            <div className="flex min-w-0 flex-col gap-px">
              <label htmlFor="mgr">Responsible Manager</label>
              <input id="mgr" readOnly defaultValue="Manufacturing" className={`bg-[#f7f8fa] ${SUNK}`} />
            </div>
            <Lookup id="res" label="Primary Resource" value="ATM ENG  Automation Systems Engineer" icon="person" />
          </div>
        </div>
      </div>
    </section>
  );
}

const Badge = ({ n, at }) => (
  <span className={`absolute flex size-10 items-center justify-center rounded-full bg-[#e8aa53] font-['Open_Sans',sans-serif] text-[25px] leading-none font-bold text-white shadow-[0_1px_2px_rgba(60,60,60,0.7)] ${at}`}>
    {n}
  </span>
);

const MENU = [["", "F", "ile"], ["", "E", "dit"], ["", "V", "iew"], ["", "P", "roject"], ["E", "n", "terprise"], ["", "T", "ools"], ["", "A", "dmin"], ["", "H", "elp"]];
const STATUS = [
  ["w-[76px]", ""], ["w-[121px]", "Portfolio: All Projects"], ["w-[126px]", "Access Mode: Shared"], ["w-[146px]", "Data Date: 30-Apr-11"],
  ["w-[311px]", "Baseline: Cordova, Plant Expansion & Modernization - B1"], ["w-[79px]", "User: ADMIN"], ["w-[166px]", "DB: Standalone (Professional)"],
  ["w-[101px]", ""], ["flex-1", ""],
];

export default function App() {
  return (
    <div className="relative flex min-h-screen flex-col overflow-hidden bg-white pl-[9px] font-['Liberation_Sans',Arial,sans-serif] text-black">
      <header className="font-[Roboto,sans-serif]">
        <div className="flex h-[52px] items-center pt-[21px]">
          <span className="ml-[2px] h-4 w-5 bg-[#d8261c]" />
          <h1 className="ml-[5px] flex-1 text-[12px]">Primavera P6 Professional 23 : MFG00772 (Cordova - Plant Expansion &amp; Modernization)</h1>
          <div className="mr-[17px] flex items-center gap-[30px]">
            {["M3 8h10", "M3 5.500h7.500V13H3zM5.500 5.500V3H13v7.500h-2.500", "M3 3l10 10M13 3L3 13"].map((d, i) => (
              <button key={d} type="button" aria-label={["Minimize", "Restore", "Close"][i]}>
                <svg viewBox="0 0 16 16" className="size-4" fill="none" stroke="#000" strokeWidth="1.200" aria-hidden="true"><path d={d} /></svg>
              </button>
            ))}
          </div>
        </div>
        <div className="flex h-[21px] items-start border-b border-[#a2a0a4] pl-[5px]">
          <span className="h-[17px] border-l-2 border-dotted border-[#b4b4b4]" />
          <nav className="flex text-[12px] leading-[18px]">
            {MENU.map(([a, u, b]) => (
              <button key={u + b} type="button" className="-mr-px ml-[2px] px-[5px]">{a}<span className="underline">{u}</span>{b}</button>
            ))}
          </nav>
          <span className="mt-3 mr-1 ml-auto"><Caret /></span>
        </div>
        <div className="border-b border-[#a2a0a4]"><TopTools /></div>
      </header>

      <div className="flex flex-1">
        <SideTools
          label="Left tools"
          groups={[
            ["folderAdd", "folderOpen", "folderUp"],
            ["folder", "person", "notebook", "chart"],
            ["act", "act2", "wbs", "actPerson", "doc", "calc", "dice"],
          ]}
        />
        <main className="flex min-w-0 flex-1 flex-col border-x border-b border-[#98989c]">
          <div className="flex flex-1 flex-col border-2 border-[#cfe9f8] bg-white">
            <h2 className="h-6 border border-[#dcdcde] bg-[#f7f8f8] pl-1 font-[Roboto,sans-serif] text-[13px] leading-[24px] font-bold">Activities</h2>
            <div className="mt-[3px] flex flex-1 flex-col bg-[#d6d8d8] px-[6px] pt-[5px] pb-[4px]">
              <div className="flex flex-1 flex-col border-l border-r border-[#8c8c8e] border-r-[#a8a8aa] border-b border-b-white">
                <div className="flex h-[18px] border-y border-[#98989a] bg-[#eceeee] text-[11px] leading-[16px]">
                  <button type="button" className="flex w-[340px] items-center gap-[3px] border-r border-[#98989a] pl-3 text-left">
                    <svg viewBox="0 0 8 6" className="h-[6px] w-2" fill="none" stroke="#444" aria-hidden="true"><path d="M0 1l3 4 5-5" /></svg>
                    Layout: Classic Schedule Layout
                  </button>
                  <span className="pl-[3px]">Filter: All Activities</span>
                </div>
                <div className="flex">
                  <div className="w-[631px] shrink-0 border-r border-[#98989a] bg-white">
                    <div className="flex">
                      <div className="min-w-0 flex-1"><ActivityTable /></div>
                      <VScroll thumb="mt-[138px]" />
                    </div>
                    <HScroll thumb="" end="mr-4" />
                  </div>
                  <div className="ml-[3px] flex min-w-0 flex-1 flex-col border-l-2 border-[#88888a]">
                    <div className="flex">
                      <Gantt />
                      <VScroll thumb="mt-[118px]" />
                    </div>
                    <HScroll thumb="ml-[223px]" end="mr-4" />
                  </div>
                </div>
                <div className="h-[6px] border-t border-b-2 border-[#98989a] bg-[#f4f4f4]" />
                <Details />
              </div>
            </div>
          </div>
        </main>
        <SideTools
          label="Right tools"
          groups={[
            ["plus", "del", "cut", "copy", "paste"],
            ["asgRes", "asgRole2", "asgRole", "asgCode", "pred", "succ", "steps"],
            ["up", "down", "left", "right"],
          ]}
        />
      </div>

      <footer className="flex h-[18px] gap-[2px] border-b-2 border-[#222] bg-[#f0f0f1] pt-px pl-24 font-[Roboto,sans-serif] text-[12px] leading-[15px] whitespace-nowrap">
        {STATUS.map(([w, t], i) => (
          <span key={i} className={`${w} ${w === "flex-1" ? "" : "shrink-0"} overflow-hidden border-t border-l border-[#a0a0a2] pl-px`}>{t}</span>
        ))}
        <svg viewBox="0 0 14 14" className="size-[14px] shrink-0" stroke="#999" aria-hidden="true"><path d="M2 14L14 2M7 14l7-7M11 14l3-3" /></svg>
      </footer>

      <Badge n="1" at="left-3 top-[13px]" />
      <Badge n="2" at="left-[60px] top-[13px]" />
      <Badge n="3" at="left-5 top-[124px]" />
      <Badge n="4" at="left-[117px] top-[94px]" />
      <Badge n="5" at="right-[29px] top-[104px]" />
      <Badge n="6" at="left-[155px] top-[817px]" />
    </div>
  );
}
